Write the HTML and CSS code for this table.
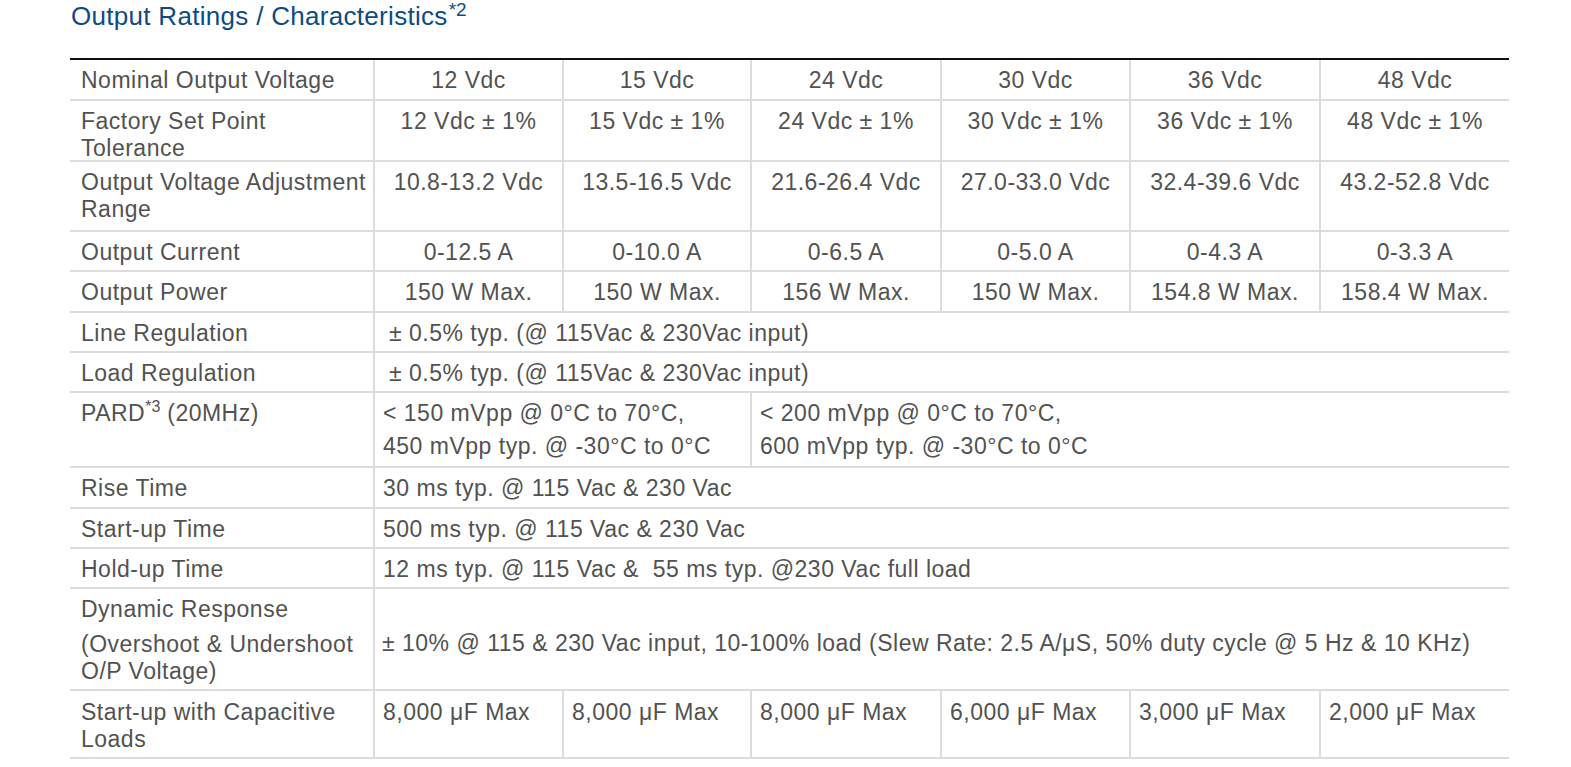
FILE: index.html
```html
<!DOCTYPE html>
<html lang="en">
<head>
<meta charset="utf-8">
<title>Output Ratings / Characteristics</title>
<link rel="stylesheet" href="styles.css">
</head>
<body>
<div class="page">
  <h2 class="title">Output Ratings / Characteristics<sup>*2</sup></h2>
  <div class="spec">
    <div class="c lab r1">Nominal Output Voltage</div>
    <div class="c v ctr">12 Vdc</div>
    <div class="c v ctr">15 Vdc</div>
    <div class="c v ctr">24 Vdc</div>
    <div class="c v ctr">30 Vdc</div>
    <div class="c v ctr">36 Vdc</div>
    <div class="c v ctr">48 Vdc</div>

    <div class="c lab">Factory Set Point<br>Tolerance</div>
    <div class="c v ctr">12 Vdc ± 1%</div>
    <div class="c v ctr">15 Vdc ± 1%</div>
    <div class="c v ctr">24 Vdc ± 1%</div>
    <div class="c v ctr">30 Vdc ± 1%</div>
    <div class="c v ctr">36 Vdc ± 1%</div>
    <div class="c v ctr">48 Vdc ± 1%</div>

    <div class="c lab">Output Voltage Adjustment<br>Range</div>
    <div class="c v ctr">10.8-13.2 Vdc</div>
    <div class="c v ctr">13.5-16.5 Vdc</div>
    <div class="c v ctr">21.6-26.4 Vdc</div>
    <div class="c v ctr">27.0-33.0 Vdc</div>
    <div class="c v ctr">32.4-39.6 Vdc</div>
    <div class="c v ctr">43.2-52.8 Vdc</div>

    <div class="c lab">Output Current</div>
    <div class="c v ctr">0-12.5 A</div>
    <div class="c v ctr">0-10.0 A</div>
    <div class="c v ctr">0-6.5 A</div>
    <div class="c v ctr">0-5.0 A</div>
    <div class="c v ctr">0-4.3 A</div>
    <div class="c v ctr">0-3.3 A</div>

    <div class="c lab">Output Power</div>
    <div class="c v ctr">150 W Max.</div>
    <div class="c v ctr">150 W Max.</div>
    <div class="c v ctr">156 W Max.</div>
    <div class="c v ctr">150 W Max.</div>
    <div class="c v ctr">154.8 W Max.</div>
    <div class="c v ctr">158.4 W Max.</div>

    <div class="c lab">Line Regulation</div>
    <div class="c v span6 indent">± 0.5% typ. (@ 115Vac &amp; 230Vac input)</div>

    <div class="c lab">Load Regulation</div>
    <div class="c v span6 indent">± 0.5% typ. (@ 115Vac &amp; 230Vac input)</div>

    <div class="c lab">PARD<sup>*3</sup> (20MHz)</div>
    <div class="c v span2 pard">&lt; 150 mVpp @ 0°C to 70°C,<br>450 mVpp typ. @ -30°C to 0°C</div>
    <div class="c v span4 pard">&lt; 200 mVpp @ 0°C to 70°C,<br>600 mVpp typ. @ -30°C to 0°C</div>

    <div class="c lab">Rise Time</div>
    <div class="c v span6">30 ms typ. @ 115 Vac &amp; 230 Vac</div>

    <div class="c lab">Start-up Time</div>
    <div class="c v span6">500 ms typ. @ 115 Vac &amp; 230 Vac</div>

    <div class="c lab">Hold-up Time</div>
    <div class="c v span6">12 ms typ. @ 115 Vac &amp;&nbsp; 55 ms typ. @230 Vac full load</div>

    <div class="c lab"><div class="head">Dynamic Response</div><div>(Overshoot &amp; Undershoot<br>O/P Voltage)</div></div>
    <div class="c v span6 mid">± 10% @ 115 &amp; 230 Vac input, 10-100% load (Slew Rate: 2.5 A/μS, 50% duty cycle @ 5 Hz &amp; 10 KHz)</div>

    <div class="c lab last">Start-up with Capacitive<br>Loads</div>
    <div class="c v last">8,000 μF Max</div>
    <div class="c v last">8,000 μF Max</div>
    <div class="c v last">8,000 μF Max</div>
    <div class="c v last">6,000 μF Max</div>
    <div class="c v last">3,000 μF Max</div>
    <div class="c v last">2,000 μF Max</div>
  </div>
</div>
</body>
</html>
```

FILE: styles.css
```css
html, body {
  margin: 0;
  padding: 0;
  background: #ffffff;
}

.page {
  padding: 2px 0 0 70px;
  font-family: "Liberation Sans", Arial, sans-serif;
}

.title {
  margin: 0 0 27px 1px;
  height: 29px;
  line-height: 29px;
  font-size: 26px;
  font-weight: normal;
  letter-spacing: 0.3px;
  color: #0b4c84;
  white-space: nowrap;
}

.title sup {
  font-size: 19px;
  line-height: 0;
  vertical-align: 9px;
  letter-spacing: 0;
  margin-left: 1px;
}

.spec {
  width: 1439px;
  display: grid;
  grid-template-columns: 303px 189px 188px 190px 189px 190px 190px;
  grid-template-rows: 41px 61px 70px 40px 41px 40px 40px 75px 41px 40px 40px 102px 68px;
  border-top: 2px solid #111111;
  color: #525252;
  font-size: 23px;
  letter-spacing: 0.5px;
  line-height: 27px;
}

.c {
  box-sizing: border-box;
  border-bottom: 2px solid #dcdcdc;
  padding: 7px 4px 0 8px;
  white-space: nowrap;
  overflow: hidden;
}

.lab {
  padding-left: 11px;
}

.v {
  border-left: 2px solid #dcdcdc;
}

.ctr {
  text-align: center;
  padding-left: 2px;
  padding-right: 2px;
}

.span6 {
  grid-column: span 6;
}

.span4 {
  grid-column: span 4;
}

.span2 {
  grid-column: span 2;
}

.indent {
  padding-left: 14px;
}

.pard {
  line-height: 33px;
  padding-top: 4px;
}

.lab sup {
  font-size: 16px;
  line-height: 0;
  vertical-align: 9px;
  letter-spacing: 0;
}

.head {
  margin-bottom: 8px;
}

.mid {
  display: flex;
  align-items: center;
  padding-top: 8px;
  padding-left: 7px;
}

.last {
  padding-top: 8px;
}
```
